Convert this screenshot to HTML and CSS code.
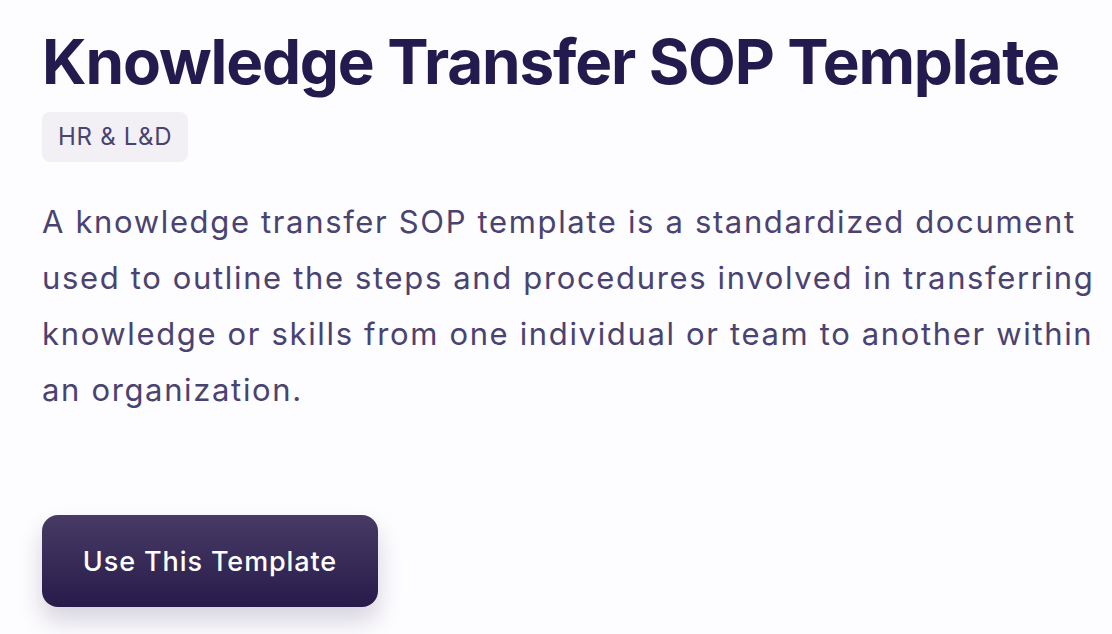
FILE: index.html
```html
<!DOCTYPE html>
<html>
<head>
<meta charset="utf-8">
<link rel="stylesheet" href="styles.css">
</head>
<body>
<main class="page">
  <h1 class="title">Knowledge Transfer SOP Template</h1>
  <div class="tags"><span class="tag">HR &amp; L&amp;D</span></div>
  <p class="desc">A knowledge transfer SOP template is a standardized document used to outline the steps and procedures involved in transferring knowledge or skills from one individual or team to another within an organization.</p>
  <div class="actions"><button class="btn">Use This Template</button></div>
</main>
</body>
</html>
```
FILE: styles.css
```css
html {
  height: 100%;
  background: #fdfcfe;
}
body {
  margin: 0;
  padding: 0;
  height: 100%;
  background: #fdfcfe;
  overflow: hidden;
}
.page {
  padding: 24px 0 20px 42px;
  width: 1060px;
  font-family: Inter, "Noto Sans", sans-serif;
}
.title {
  margin: 0;
  font-size: 62px;
  line-height: 76px;
  font-weight: 700;
  color: #231a4d;
  letter-spacing: -1.15px;
}
.tags {
  display: flex;
  margin-top: 12px;
}
.tag {
  background: #f2f0f5;
  color: #4a4370;
  font-size: 24px;
  letter-spacing: 0.7px;
  line-height: 50px;
  padding: 0 16px;
  border-radius: 8px;
}
.desc {
  margin: 32px 0 0 0;
  font-size: 31px;
  letter-spacing: 1.65px;
  line-height: 56px;
  color: #4a4370;
  width: 1066px;
}
.actions {
  margin-top: 97px;
  display: flex;
}
.btn {
  width: 336px;
  height: 92px;
  border: 0;
  border-radius: 16px;
  background: linear-gradient(180deg, #473b65 0%, #281b4b 100%);
  color: #ffffff;
  font-family: inherit;
  font-size: 27px;
  letter-spacing: 0.9px;
  font-weight: 500;
  box-shadow: 0 14px 24px rgba(40, 27, 75, 0.18);
}
```
